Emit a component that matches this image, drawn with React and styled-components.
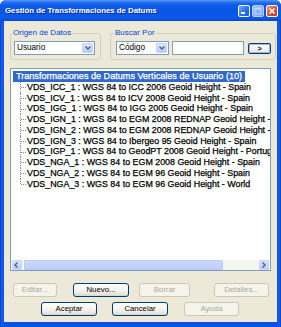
import React from "react";
import styled, { createGlobalStyle } from "styled-components";

const GlobalStyle = createGlobalStyle`
  html, body {
    margin: 0;
    padding: 0;
    background: #ffffff;
  }
  body {
    font-family: "Liberation Sans", Arial, sans-serif;
  }
`;

const Window = styled.div`
  width: 281px;
  height: 327px;
  display: flex;
  flex-direction: column;
  background: linear-gradient(to right, #0A3FD0 0, #1660EC 2px, #0A52E4 4px, #0A52E4 277px, #1660EC 279px, #0A3FD0 281px);
  border-radius: 6px 6px 0 0;
  overflow: hidden;
`;

const TitleBar = styled.div`
  height: 21px;
  flex: none;
  display: flex;
  align-items: center;
  padding: 0 3px 0 5px;
  box-sizing: border-box;
  background: linear-gradient(
    to bottom,
    #5A9CF8 0,
    #2A74F0 2px,
    #0C5CE8 5px,
    #0855E2 12px,
    #0A5BEC 18px,
    #0646D2 21px
  );
`;

const Title = styled.div`
  flex: 1;
  color: #ffffff;
  font: bold 7.8px "Liberation Sans", Arial, sans-serif;
  text-shadow: 1px 1px 0 #0A2A8A;
  white-space: nowrap;
`;

const Controls = styled.div`
  display: flex;
  align-items: center;
  gap: 2px;
`;

const CtrlBtn = styled.div`
  width: 12px;
  height: 12px;
  box-sizing: border-box;
  border: 1px solid ${(p) => (p.$disabled ? "#B8CFF8" : "#ffffff")};
  border-radius: 2px;
  display: flex;
  align-items: center;
  justify-content: center;
  background: ${(p) =>
    p.$close
      ? "linear-gradient(135deg, #F0A080 0%, #D9562E 50%, #C03C18 100%)"
      : p.$disabled
      ? "linear-gradient(135deg, #9CBCF8 0%, #76A2F0 100%)"
      : "linear-gradient(135deg, #78AEFA 0%, #2C6EEA 55%, #1F5BD8 100%)"};
`;

const Body = styled.div`
  flex: 1;
  margin: 0 4px 5px;
  background: #ECE9D8;
  padding: 7px 0 0 6px;
  display: flex;
  flex-direction: column;
`;

const GroupRow = styled.div`
  display: flex;
  gap: 9px;
`;

const Group = styled.fieldset`
  margin: 0;
  width: ${(p) => p.$w}px;
  box-sizing: border-box;
  border: 1px solid #D0D0BF;
  border-radius: 3px;
  padding: 3px 4px 4px ${(p) => p.$pl}px;
  display: flex;
  align-items: center;
  gap: 2px;
`;

const Legend = styled.legend`
  padding: 0 1px;
  margin-left: -2px;
  font-size: 8px;
  line-height: 10px;
  color: #0046D5;
`;

const Combo = styled.div`
  width: ${(p) => p.$w}px;
  height: 14px;
  box-sizing: border-box;
  border: 1px solid #7F9DB9;
  background: #ffffff;
  display: flex;
  align-items: stretch;
  flex: none;
`;

const ComboText = styled.div`
  flex: 1;
  font-size: 8.2px;
  line-height: 12px;
  padding-left: 2px;
  color: #000000;
`;

const DropBtn = styled.div`
  width: 11px;
  margin: 1px;
  box-sizing: border-box;
  border: 1px solid #C3D3FD;
  border-radius: 1px;
  background: linear-gradient(to bottom, #DCE6FE, #B9CCF9);
  display: flex;
  align-items: center;
  justify-content: center;
`;

const TextField = styled.div`
  width: ${(p) => p.$w}px;
  height: 14px;
  box-sizing: border-box;
  border: 1px solid #7F9DB9;
  background: #ffffff;
  margin-left: 1px;
  flex: none;
`;

const GoBtn = styled.div`
  width: 23px;
  height: 11px;
  margin-left: 2px;
  box-sizing: border-box;
  border: 1px solid #003C74;
  border-radius: 2px;
  background: linear-gradient(to bottom, #FFFFFF, #EEEDE5 80%, #D8D4C8);
  box-shadow: inset 0 0 0 1px #9DB8EC;
  font: bold 7px "Liberation Sans", Arial, sans-serif;
  line-height: 9px;
  text-align: center;
  color: #000000;
`;

const ListBox = styled.div`
  margin-top: 8px;
  width: 261px;
  height: 203px;
  box-sizing: border-box;
  border: 1px solid #7F9DB9;
  background: #ffffff;
  display: flex;
  flex-direction: column;
`;

const Tree = styled.div`
  flex: 1;
  overflow: hidden;
  padding-top: 2px;
  font-size: 8.9px;
  color: #000000;
  white-space: nowrap;
  -webkit-text-stroke: 0.25px currentColor;
`;

const Root = styled.div`
  display: inline-block;
  margin-left: 2px;
  padding: 0 3px;
  height: 10.75px;
  line-height: 10.75px;
  background: #316AC5;
  color: #ffffff;
  font-size: 9.1px;
`;

const Items = styled.div`
  margin-left: 9px;
`;

const Item = styled.div`
  display: flex;
  align-items: center;
  height: 10.75px;
  line-height: 10.75px;
`;

const Branch = styled.span`
  position: relative;
  width: 7px;
  align-self: stretch;
  flex: none;
  &::before {
    content: "";
    position: absolute;
    left: 0;
    top: 0;
    bottom: ${(p) => (p.$last ? "50%" : "0")};
    border-left: 1px dotted #8A8A8A;
  }
  &::after {
    content: "";
    position: absolute;
    left: 1px;
    top: 50%;
    width: 5px;
    border-top: 1px dotted #8A8A8A;
  }
`;

const HScroll = styled.div`
  height: 10px;
  flex: none;
  display: flex;
  padding: 0 1px;
  gap: 1px;
  background: #F7F7F2;
`;

const ScrollArrow = styled.div`
  width: 10px;
  flex: none;
  box-sizing: border-box;
  border: 1px solid #C8D6FA;
  border-radius: 1px;
  background: linear-gradient(to bottom, #D8E3FD, #BACDF8);
  display: flex;
  align-items: center;
  justify-content: center;
`;

const Thumb = styled.div`
  width: 199px;
  margin-left: 1px;
  flex: none;
  box-sizing: border-box;
  border: 1px solid #B7CBF6;
  border-radius: 1px;
  background: linear-gradient(to bottom, #CCDAFC, #BCCEF9);
`;

const Track = styled.div`
  flex: 1;
`;

const ButtonRow = styled.div`
  display: flex;
  margin-top: ${(p) => p.$mt}px;
`;

const Button = styled.div`
  width: ${(p) => p.$w}px;
  margin-left: ${(p) => p.$ml}px;
  height: 14px;
  box-sizing: border-box;
  border: 1px solid ${(p) => (p.$disabled ? "#CBC8BA" : "#003C74")};
  border-radius: 3px;
  background: ${(p) =>
    p.$disabled
      ? "#F5F4EA"
      : "linear-gradient(to bottom, #FFFFFF 0%, #F2F1EC 60%, #E3E0D6 90%, #D6D0C5 100%)"};
  color: ${(p) => (p.$disabled ? "#ACA899" : "#000000")};
  font-size: 7.8px;
  line-height: 12px;
  text-align: center;
  flex: none;
`;

const Chevron = ({ dir = "down", color = "#4D6185" }) => {
  const d = {
    down: "M1.5 2.5 L4 5 L6.5 2.5",
    left: "M4.5 1.5 L2 4 L4.5 6.5",
    right: "M2.5 1.5 L5 4 L2.5 6.5",
  }[dir];
  return (
    <svg width="8" height="8" viewBox="0 0 8 8">
      <path d={d} fill="none" stroke={color} strokeWidth="1.4" />
    </svg>
  );
};

const items = [
  "VDS_ICC_1 : WGS 84 to ICC 2006 Geoid Height - Spain",
  "VDS_ICV_1 : WGS 84 to ICV 2008 Geoid Height - Spain",
  "VDS_IGG_1 : WGS 84 to IGG 2005 Geoid Height - Spain",
  "VDS_IGN_1 : WGS 84 to EGM 2008 REDNAP Geoid Height - Spain",
  "VDS_IGN_2 : WGS 84 to EGM 2008 REDNAP Geoid Height - Spain",
  "VDS_IGN_3 : WGS 84 to Ibergeo 95 Geoid Height - Spain",
  "VDS_IGP_1 : WGS 84 to GeodPT 2008 Geoid Height - Portugal",
  "VDS_NGA_1 : WGS 84 to EGM 2008 Geoid Height - Spain",
  "VDS_NGA_2 : WGS 84 to EGM 96 Geoid Height - Spain",
  "VDS_NGA_3 : WGS 84 to EGM 96 Geoid Height - World",
];

const App = () => {
  return (
    <>
      <GlobalStyle />
      <Window>
        <TitleBar>
          <Title>Gestión de Transformaciones de Datums</Title>
          <Controls>
            <CtrlBtn>
              <svg width="10" height="10" viewBox="0 0 10 10">
                <rect x="2" y="6" width="4" height="2" fill="#ffffff" />
              </svg>
            </CtrlBtn>
            <CtrlBtn $disabled>
              <svg width="10" height="10" viewBox="0 0 10 10">
                <rect x="2" y="2" width="6" height="6" fill="none" stroke="#C8DAFA" strokeWidth="1" />
                <rect x="2" y="2" width="6" height="1.5" fill="#C8DAFA" />
              </svg>
            </CtrlBtn>
            <CtrlBtn $close>
              <svg width="10" height="10" viewBox="0 0 10 10">
                <path d="M2.5 2.5 L7.5 7.5 M7.5 2.5 L2.5 7.5" stroke="#ffffff" strokeWidth="1.5" />
              </svg>
            </CtrlBtn>
          </Controls>
        </TitleBar>
        <Body>
          <GroupRow>
            <Group $w={91} $pl={3}>
              <Legend>Origen de Datos</Legend>
              <Combo $w={81}>
                <ComboText>Usuario</ComboText>
                <DropBtn>
                  <Chevron />
                </DropBtn>
              </Combo>
            </Group>
            <Group $w={164} $pl={5}>
              <Legend>Buscar Por</Legend>
              <Combo $w={53}>
                <ComboText>Código</ComboText>
                <DropBtn>
                  <Chevron />
                </DropBtn>
              </Combo>
              <TextField $w={72} />
              <GoBtn>&gt;</GoBtn>
            </Group>
          </GroupRow>
          <ListBox>
            <Tree>
              <Root>Transformaciones de Datums Verticales de Usuario (10)</Root>
              <Items>
                {items.map((t, i) => (
                  <Item key={t}>
                    <Branch $last={i === items.length - 1} />
                    {t}
                  </Item>
                ))}
              </Items>
            </Tree>
            <HScroll>
              <ScrollArrow>
                <Chevron dir="left" />
              </ScrollArrow>
              <Thumb />
              <Track />
              <ScrollArrow>
                <Chevron dir="right" />
              </ScrollArrow>
            </HScroll>
          </ListBox>
          <ButtonRow $mt={12}>
            <Button $w={44} $ml={3} $disabled>Editar...</Button>
            <Button $w={56} $ml={16}>Nuevo...</Button>
            <Button $w={51} $ml={10} $disabled>Borrar</Button>
            <Button $w={55} $ml={24} $disabled>Detalles...</Button>
          </ButtonRow>
          <ButtonRow $mt={5}>
            <Button $w={56} $ml={31}>Aceptar</Button>
            <Button $w={56} $ml={15}>Cancelar</Button>
            <Button $w={55} $ml={16} $disabled>Ayuda</Button>
          </ButtonRow>
        </Body>
      </Window>
    </>
  );
};

export default App;
